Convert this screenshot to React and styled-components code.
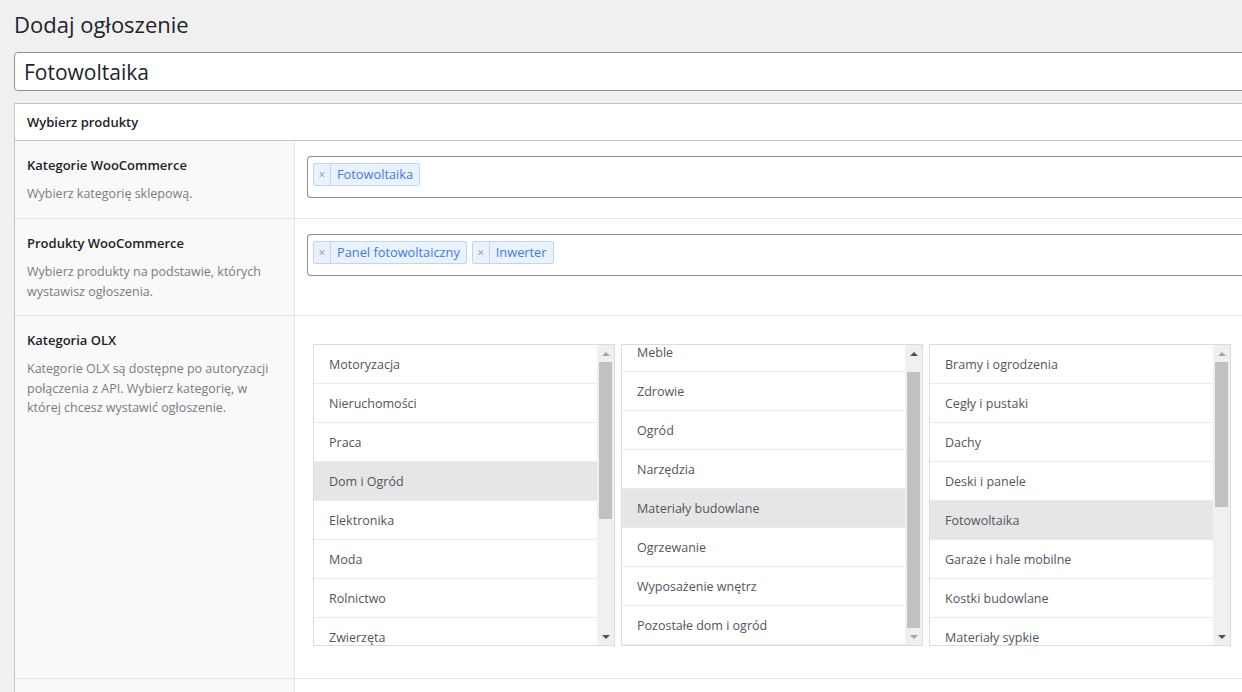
import styled, { createGlobalStyle } from "styled-components";
import { useEffect, useRef } from "react";

const GlobalStyle = createGlobalStyle`
  html, body {
    margin: 0;
    padding: 0;
    background: #f0f0f1;
    overflow: hidden;
  }
  body {
    font-family: "Open Sans", "Noto Sans", sans-serif;
    color: #1d2327;
  }
`;

const categories = [
  "Motoryzacja",
  "Nieruchomości",
  "Praca",
  "Dom i Ogród",
  "Elektronika",
  "Moda",
  "Rolnictwo",
  "Zwierzęta",
  "Dla Dzieci",
  "Sport i Hobby",
  "Muzyka i Edukacja",
  "Usługi i Firmy",
  "Noclegi",
];

const subCategories = [
  "Meble",
  "Zdrowie",
  "Ogród",
  "Narzędzia",
  "Materiały budowlane",
  "Ogrzewanie",
  "Wyposażenie wnętrz",
  "Pozostałe dom i ogród",
];

const leafCategories = [
  "Bramy i ogrodzenia",
  "Cegły i pustaki",
  "Dachy",
  "Deski i panele",
  "Fotowoltaika",
  "Garaże i hale mobilne",
  "Kostki budowlane",
  "Materiały sypkie",
  "Okna i drzwi",
  "Pokrycia dachowe",
  "Stal i metale",
  "Stolarka",
  "Tynki i farby",
  "Pozostałe",
];

const ListBox = ({ items, selected, scroll = 0, thumbTop, thumbHeight }) => {
  const listRef = useRef(null);

  useEffect(() => {
    if (listRef.current) listRef.current.scrollTop = scroll;
  }, [scroll]);

  const atTop = scroll === 0;

  return (
    <Box>
      <Items ref={listRef}>
        {items.map((item) => (
          <Item key={item} $active={item === selected}>
            {item}
          </Item>
        ))}
      </Items>
      <Scrollbar>
        <ArrowButton>
          <Triangle $up $disabled={atTop} />
        </ArrowButton>
        <Track>
          <Thumb style={{ marginTop: thumbTop, height: thumbHeight }} />
        </Track>
        <ArrowButton>
          <Triangle $disabled={!atTop} />
        </ArrowButton>
      </Scrollbar>
    </Box>
  );
};

const Tag = ({ children }) => (
  <TagWrap>
    <TagRemove>×</TagRemove>
    <TagText>{children}</TagText>
  </TagWrap>
);

export default function App() {
  return (
    <>
      <GlobalStyle />
      <Page>
        <Title>Dodaj ogłoszenie</Title>
        <TitleInput defaultValue="Fotowoltaika" />

        <Panel>
          <PanelHeader>Wybierz produkty</PanelHeader>

          <Row>
            <LabelCol>
              <Label>Kategorie WooCommerce</Label>
              <Desc>Wybierz kategorię sklepową.</Desc>
            </LabelCol>
            <FieldCol>
              <MultiSelect>
                <Tag>Fotowoltaika</Tag>
              </MultiSelect>
            </FieldCol>
          </Row>

          <Row>
            <LabelCol>
              <Label>Produkty WooCommerce</Label>
              <Desc>
                Wybierz produkty na podstawie, których
                <br />
                wystawisz ogłoszenia.
              </Desc>
            </LabelCol>
            <FieldCol>
              <MultiSelect>
                <Tag>Panel fotowoltaiczny</Tag>
                <Tag>Inwerter</Tag>
              </MultiSelect>
            </FieldCol>
          </Row>

          <Row>
            <LabelCol>
              <Label>Kategoria OLX</Label>
              <Desc>
                Kategorie OLX są dostępne po autoryzacji
                <br />
                połączenia z API. Wybierz kategorię, w
                <br />
                której chcesz wystawić ogłoszenie.
              </Desc>
            </LabelCol>
            <ListsCol>
              <ListBox
                items={categories}
                selected="Dom i Ogród"
                thumbTop={0}
                thumbHeight={157}
              />
              <ListBox
                items={subCategories}
                selected="Materiały budowlane"
                scroll={12}
                thumbTop={10}
                thumbHeight={256}
              />
              <ListBox
                items={leafCategories}
                selected="Fotowoltaika"
                thumbTop={0}
                thumbHeight={145}
              />
            </ListsCol>
          </Row>

          <Row>
            <LabelCol $empty />
            <FieldCol />
          </Row>
        </Panel>
      </Page>
    </>
  );
}

const Page = styled.div`
  width: 1290px;
  padding: 0 0 0 14px;
`;

const Title = styled.h1`
  margin: 0;
  padding: 9px 0 4px;
  font-size: 22px;
  font-weight: 400;
  line-height: 30px;
  color: #1d2327;
`;

const TitleInput = styled.input`
  display: block;
  box-sizing: border-box;
  width: 100%;
  height: 39px;
  margin: 9px 0 12px;
  padding: 0 9px;
  border: 1px solid #8c8f94;
  border-radius: 4px;
  background: #fff;
  font-family: "Open Sans", "Noto Sans", sans-serif;
  font-size: 21px;
  color: #1d2327;
  outline: none;
`;

const Panel = styled.div`
  background: #fff;
  border: 1px solid #c3c4c7;
  border-right: none;
`;

const PanelHeader = styled.div`
  height: 36px;
  padding: 0 12px;
  display: flex;
  align-items: center;
  font-size: 13px;
  font-weight: 600;
  color: #1d2327;
  border-bottom: 1px solid #c3c4c7;
`;

const Row = styled.div`
  display: flex;
  border-bottom: 1px solid #e6e6e6;
`;

const LabelCol = styled.div`
  box-sizing: border-box;
  width: 280px;
  flex-shrink: 0;
  padding: 15px 12px 14px;
  min-height: ${(p) => (p.$empty ? "40px" : "0")};
  background: #f9f9f9;
  border-right: 1px solid #e6e6e6;
`;

const Label = styled.div`
  font-size: 13px;
  font-weight: 600;
  line-height: 18px;
  color: #1d2327;
`;

const Desc = styled.div`
  margin-top: 10px;
  font-size: 12.5px;
  line-height: 19.5px;
  color: #787c82;
`;

const FieldCol = styled.div`
  flex: 1;
  padding: 15px 0 20px 12px;
`;

const MultiSelect = styled.div`
  box-sizing: border-box;
  height: 42px;
  padding: 6px 5px;
  display: flex;
  align-items: flex-start;
  gap: 5px;
  border: 1px solid #8c8f94;
  border-right: none;
  border-radius: 4px 0 0 4px;
  background: #fff;
`;

const TagWrap = styled.div`
  display: flex;
  height: 23px;
  box-sizing: border-box;
  border: 1px solid #bcd5fb;
  border-radius: 2px;
  background: #eaf2ff;
  font-size: 12.8px;
  line-height: 21px;
`;

const TagRemove = styled.span`
  width: 16px;
  text-align: center;
  color: #999;
  font-size: 12px;
  border-right: 1px solid #bcd5fb;
`;

const TagText = styled.span`
  padding: 0 6px;
  color: #3f78f0;
`;

const ListsCol = styled.div`
  flex: 1;
  display: flex;
  gap: 6px;
  padding: 28px 12px 32px 18px;
`;

const Box = styled.div`
  box-sizing: border-box;
  width: 302px;
  height: 302px;
  display: flex;
  border: 1px solid #dcdcde;
  background: #fff;
`;

const Items = styled.div`
  flex: 1;
  overflow: hidden;
`;

const Item = styled.div`
  box-sizing: border-box;
  height: 39px;
  padding-left: 15px;
  display: flex;
  align-items: center;
  font-size: 12.5px;
  color: #50575e;
  background: ${(p) => (p.$active ? "#e6e6e6" : "#fff")};
  border-bottom: 1px solid #ececec;
`;

const Scrollbar = styled.div`
  width: 17px;
  display: flex;
  flex-direction: column;
  background: #f0f0f0;
`;

const ArrowButton = styled.div`
  height: 17px;
  display: flex;
  align-items: center;
  justify-content: center;
`;

const Triangle = styled.div`
  width: 0;
  height: 0;
  border-left: 4px solid transparent;
  border-right: 4px solid transparent;
  ${(p) =>
    p.$up
      ? `border-bottom: 4px solid ${p.$disabled ? "#a3a3a3" : "#505050"};`
      : `border-top: 4px solid ${p.$disabled ? "#a3a3a3" : "#505050"};`}
`;

const Track = styled.div`
  flex: 1;
  padding: 0 2px;
`;

const Thumb = styled.div`
  background: #c1c1c1;
`;
